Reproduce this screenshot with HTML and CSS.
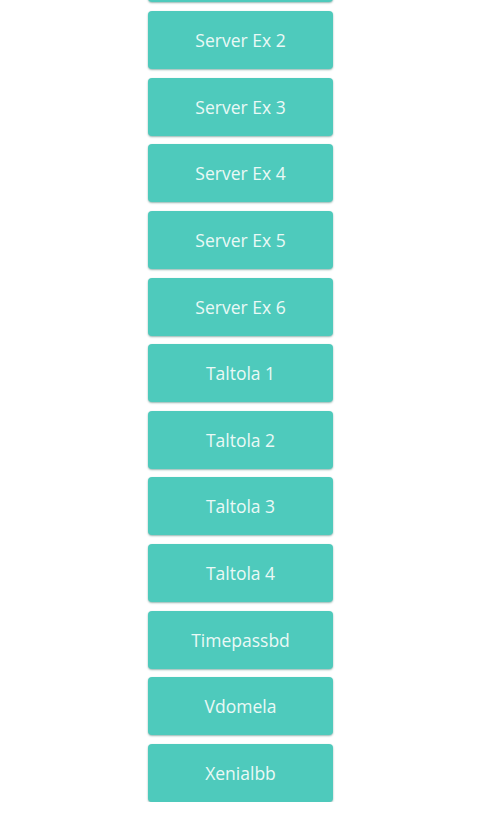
FILE: index.html
```html
<!DOCTYPE html>
<html lang="en">
<head>
    <meta charset="UTF-8">
    <meta name="viewport" content="width=device-width, initial-scale=1.0">
    <title>Servers</title>
    <link rel="stylesheet" href="styles.css">
</head>
<body>

    <div class="list">
        <a class="btn" href="#">Server Ex 1</a>
        <a class="btn" href="#">Server Ex 2</a>
        <a class="btn" href="#">Server Ex 3</a>
        <a class="btn" href="#">Server Ex 4</a>
        <a class="btn" href="#">Server Ex 5</a>
        <a class="btn" href="#">Server Ex 6</a>
        <a class="btn" href="#">Taltola 1</a>
        <a class="btn" href="#">Taltola 2</a>
        <a class="btn" href="#">Taltola 3</a>
        <a class="btn" href="#">Taltola 4</a>
        <a class="btn" href="#">Timepassbd</a>
        <a class="btn" href="#">Vdomela</a>
        <a class="btn" href="#">Xenialbb</a>
    </div>

</body>
</html>
```

FILE: styles.css
```css
body {
    font-family: 'Open Sans', sans-serif;
    background-color: #ffffff;
    margin: 0;
    padding: 0;
    overflow: hidden;
}
.list {
    display: flex;
    flex-direction: column;
    align-items: center;
    gap: 8.64px;
    margin-top: -55.6px;
    padding-left: 1px;
}
.btn {
    display: flex;
    align-items: center;
    justify-content: center;
    width: 185px;
    height: 58px;
    box-sizing: border-box;
    background: #4ecabc;
    color: #eaf9f6;
    font-size: 17.5px;
    text-decoration: none;
    border-radius: 4px;
    box-shadow: 0 1px 2px rgba(20, 90, 80, 0.45);
}
```
